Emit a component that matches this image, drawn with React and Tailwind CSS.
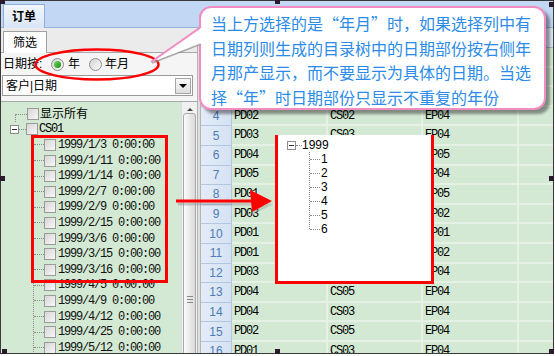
import React from "react";

const mono = { fontFamily: '"Liberation Mono", "DejaVu Sans Mono", monospace' };
const cjk = { fontFamily: '"Liberation Sans", "Noto Sans CJK SC", sans-serif' };
const cjkFirst = { fontFamily: '"Noto Sans CJK SC", sans-serif' };

const dates = [
  "1999/1/3 0:00:00",
  "1999/1/11 0:00:00",
  "1999/1/14 0:00:00",
  "1999/2/7 0:00:00",
  "1999/2/9 0:00:00",
  "1999/2/15 0:00:00",
  "1999/3/6 0:00:00",
  "1999/3/15 0:00:00",
  "1999/3/16 0:00:00",
  "1999/4/5 0:00:00",
  "1999/4/9 0:00:00",
  "1999/4/12 0:00:00",
  "1999/4/25 0:00:00",
  "1999/5/12 0:00:00",
];

// rows 1-3 sit under the callout, so they carry no text
const rows = [
  null,
  null,
  null,
  ["PD02", "CS02", "EP04"],
  ["PD03", "CS03", "EP04"],
  ["PD04", "CS01", "EP05"],
  ["PD05", "CS02", "EP04"],
  ["PD01", "CS04", "EP05"],
  ["PD03", "CS01", "EP02"],
  ["PD01", "CS03", "EP01"],
  ["PD01", "CS02", "EP02"],
  ["PD03", "CS04", "EP04"],
  ["PD04", "CS05", "EP04"],
  ["PD04", "CS03", "EP04"],
  ["PD02", "CS05", "EP04"],
  ["PD01", "CS03", "EP04"],
];

function Check() {
  return (
    <span className="w-[12px] h-[12px] shrink-0 border border-[#9a9a9a] bg-gradient-to-br from-[#d6d6d6] to-[#f8f8f8]" />
  );
}

function Radio({ on }) {
  return (
    <span className="w-[13px] h-[13px] shrink-0 rounded-full border border-[#8d8d8d] bg-gradient-to-br from-[#d4d4d4] to-[#fbfbfb] flex items-center justify-center">
      {on && <span className="w-[7px] h-[7px] rounded-full bg-gradient-to-br from-[#6fdc5c] to-[#148a14]" />}
    </span>
  );
}

export default function App() {
  return (
    <div className="relative w-[555px] h-[356px] bg-white overflow-hidden" style={cjk}>
      <div className="w-[554px] h-[354px] border border-[#3a3a3a] flex flex-col overflow-hidden">
        {/* top tab strip */}
        <div className="h-[27px] shrink-0 bg-[#c1d7f4] border-b border-[#94b2da] flex items-end pl-[2px]">
          <div className="w-[42px] h-[24px] -mb-px border border-b-0 border-[#8eadd8] bg-gradient-to-b from-[#f3f7fd] to-[#d9e6f7] flex items-center justify-center text-[12px] font-bold text-black">
            订单
          </div>
        </div>

        <div className="flex flex-1 min-h-0">
          {/* left filter panel */}
          <div className="w-[196px] shrink-0 flex flex-col bg-[#f5f5f5] overflow-hidden">
            <div className="h-[25px] shrink-0 bg-[#ebebeb] border-b border-[#a8a8a8] flex items-end pl-[2px]">
              <div className="w-[44px] h-[22px] -mb-px bg-white border border-b-0 border-[#a0a0a0] flex items-center justify-center text-[12px] text-black">
                筛选
              </div>
            </div>

            <div className="h-[22px] shrink-0 flex items-center pl-[2px] text-[12px] text-black">
              <span className="w-[48px]">日期按:</span>
              <Radio on />
              <span className="ml-[4px] w-[21px]">年</span>
              <Radio />
              <span className="ml-[3px]">年月</span>
            </div>

            <div className="h-[21px] shrink-0 ml-px w-[191px] border border-[#9a9a9a] bg-white flex items-center justify-between pl-[3px] pr-px text-[12px] text-black">
              <span>客户|日期</span>
              <span className="w-[16px] h-[16px] border border-[#a5a5a5] bg-gradient-to-b from-[#fafafa] to-[#dedede] flex items-center justify-center">
                <span className="w-0 h-0 border-l-[4px] border-r-[4px] border-t-[4px] border-l-transparent border-r-transparent border-t-black" />
              </span>
            </div>

            {/* tree */}
            <div className="mt-[5px] flex-1 min-h-0 flex border-t border-[#a9a9a9] bg-[#d3e9d3]">
              <div className="flex-1 pt-[4px] text-[12px] text-black">
                <div className="h-[15.6px] flex items-center">
                  <span className="ml-[14px] w-[12px] h-1/2 self-end border-l border-t border-dotted border-[#8a8a8a]" />
                  <Check />
                  <span className="ml-px">显示所有</span>
                </div>
                <div className="h-[15.6px] flex items-center pl-[9px]">
                  <span className="w-[9px] h-[9px] border border-[#8c8c8c] bg-white flex items-center justify-center">
                    <span className="w-[5px] h-px bg-[#333]" />
                  </span>
                  <span className="w-[7px] border-t border-dotted border-[#8a8a8a]" />
                  <Check />
                  <span className="ml-px tracking-[-1.2px]" style={mono}>
                    CS01
                  </span>
                </div>
                <div className="ml-[32px] border-l border-dotted border-[#8a8a8a]">
                  {dates.map((d) => (
                    <div key={d} className="h-[15.6px] flex items-center">
                      <span className="w-[10px] border-t border-dotted border-[#8a8a8a]" />
                      <Check />
                      <span className="ml-[2px] whitespace-pre tracking-[-1.2px] text-[#111]" style={mono}>
                        {d}
                      </span>
                    </div>
                  ))}
                </div>
              </div>
              <div className="w-[16px] shrink-0 bg-[#f0f0f0] border-l border-[#dcdcdc] flex flex-col items-center pt-[6px]">
                <div className="h-[16px] flex items-center justify-center">
                  <span className="w-0 h-0 border-l-[3px] border-r-[3px] border-b-[3px] border-l-transparent border-r-transparent border-b-[#444]" />
                </div>
                <div className="mt-[2px] w-[13px] h-[372px] shrink-0 rounded-[3px] border border-[#a9a9a9] bg-gradient-to-r from-[#fbfbfb] to-[#dadada] flex flex-col items-center justify-center gap-[2px]">
                  <span className="w-[6px] h-px bg-[#8a8a8a]" />
                  <span className="w-[6px] h-px bg-[#8a8a8a]" />
                  <span className="w-[6px] h-px bg-[#8a8a8a]" />
                </div>
              </div>
            </div>
          </div>

          {/* splitter */}
          <div className="w-[4px] shrink-0 bg-[#dedede] border-x border-[#b4b4b4]" />

          {/* grid */}
          <div className="flex-1 flex flex-col bg-[#d3e9d3] overflow-hidden">
            <div className="h-[20px] shrink-0 flex bg-[#dbe6f4] border-b border-[#9fb6d2]">
              <div className="w-[31px] border-r border-[#9fb6d2]" />
              <div className="w-[96px] border-r border-[#b8cbe2]" />
              <div className="w-[95px] border-r border-[#b8cbe2]" />
              <div className="w-[96px] border-r border-[#b8cbe2]" />
            </div>
            {rows.map((r, i) => (
              <div key={i} className="h-[19.6px] shrink-0 flex text-[12px] text-black">
                <div className="w-[31px] shrink-0 bg-gradient-to-r from-[#e4ecf7] to-[#d5e2f3] border-r border-b border-[#b3c7e0] flex items-center justify-center text-[#4d7cb7]">
                  {r ? i + 1 : ""}
                </div>
                {[0, 1, 2].map((j) => (
                  <div
                    key={j}
                    className={`${j === 1 ? "w-[95px]" : "w-[96px]"} shrink-0 border-r-2 border-b-2 border-[#e6f1e6] flex items-center pl-[2px] tracking-[-1.2px]`}
                    style={mono}
                  >
                    {r ? r[j] : ""}
                  </div>
                ))}
                <div className="flex-1 border-b-2 border-[#e6f1e6]" />
              </div>
            ))}
          </div>
        </div>
      </div>

      {/* selection handles */}
      <span className="absolute left-0 top-0 w-[5px] h-[4px] bg-[#2b1a2b]" />
      <span className="absolute left-[275px] top-0 w-[5px] h-[4px] bg-[#2b1a2b]" />
      <span className="absolute left-[549px] top-[2px] w-[5px] h-[5px] bg-[#2b1a2b]" />
      <span className="absolute left-0 top-[176px] w-[5px] h-[5px] bg-[#2b1a2b]" />
      <span className="absolute left-[549px] top-[176px] w-[5px] h-[5px] bg-[#2b1a2b]" />
      <span className="absolute left-[2px] top-[349px] w-[5px] h-[5px] bg-[#2b1a2b]" />
      <span className="absolute left-[275px] top-[349px] w-[5px] h-[5px] bg-[#2b1a2b]" />
      <span className="absolute left-[549px] top-[349px] w-[5px] h-[5px] bg-[#2b1a2b]" />

      {/* red box on left tree */}
      <div className="absolute left-[31px] top-[135px] w-[137px] h-[148px] border-[3px] border-[#ff0000]" />

      {/* result tree box */}
      <div className="absolute left-[275px] top-[135px] w-[159px] h-[149px] bg-white border-x-[3px] border-b-[3px] border-[#ff0000] pt-[3px] text-[12px] text-black">
        <div className="h-[14px] flex items-center pl-[9px]">
          <span className="w-[9px] h-[9px] border border-[#8c8c8c] bg-white flex items-center justify-center">
            <span className="w-[5px] h-px bg-[#333]" />
          </span>
          <span className="w-[6px] border-t border-dotted border-[#8a8a8a]" />
          <span>1999</span>
        </div>
        <div className="ml-[31px] border-l border-dotted border-[#8a8a8a] h-[77px] flex flex-col">
          {["1", "2", "3", "4", "5", "6"].map((n) => (
            <div key={n} className="h-[14px] shrink-0 flex items-center">
              <span className="w-[10px] border-t border-dotted border-[#8a8a8a]" />
              <span className="ml-px">{n}</span>
            </div>
          ))}
        </div>
      </div>

      {/* arrow */}
      <svg className="absolute left-[170px] top-[186px]" width="108" height="32" viewBox="0 0 108 32">
        <line x1="8" y1="18" x2="84" y2="18" stroke="#9a9a9a" strokeWidth="3" opacity="0.5" />
        <polygon points="82,7 104,18 82,29" fill="#9a9a9a" opacity="0.4" />
        <line x1="6" y1="15" x2="82" y2="15" stroke="#ff0000" strokeWidth="3" />
        <polygon points="80,4 102,15 82,26" fill="#ff0000" />
      </svg>

      {/* ellipse around radio group */}
      <svg className="absolute left-[33px] top-[47px]" width="130" height="36" viewBox="0 0 130 36">
        <ellipse cx="64" cy="17.5" rx="61.5" ry="15" fill="none" stroke="#ff0000" strokeWidth="2.5" />
      </svg>

      {/* callout */}
      <div
        className="absolute left-[199px] top-[6px] w-[347px] h-[104px] rounded-[12px] border-2 border-[#f08cc2] bg-white shadow-[4px_4px_3px_rgba(0,0,0,0.4)] pl-[10px] pt-[3px] text-[16px] leading-[24.6px] text-[#2a8be8] whitespace-nowrap"
        style={cjkFirst}
      >
        <div>当上方选择的是“年月”时，如果选择列中有</div>
        <div>日期列则生成的目录树中的日期部份按右侧年</div>
        <div>月那产显示，而不要显示为具体的日期。当选</div>
        <div>择“年”时日期部份只显示不重复的年份</div>
      </div>
      <svg className="absolute left-[146px] top-[20px]" width="62" height="50" viewBox="0 0 62 50">
        <polygon points="56,7 5,42 56,24" fill="#ffffff" />
        <polyline points="55,24 6,43" fill="none" stroke="#8a8a8a" strokeWidth="1.5" opacity="0.7" />
        <polyline points="55,7 5,42" fill="none" stroke="#f08cc2" strokeWidth="2" />
        <line x1="56" y1="8" x2="56" y2="24" stroke="#ffffff" strokeWidth="3" />
      </svg>
    </div>
  );
}
